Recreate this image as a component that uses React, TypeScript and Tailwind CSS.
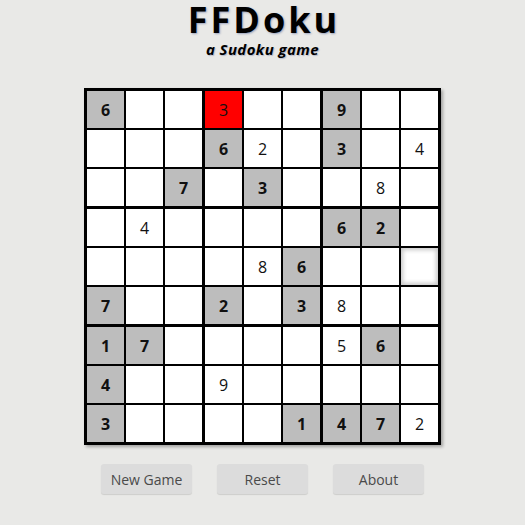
import React from "react";

type Cell = { v: string; given?: boolean; bad?: boolean; sel?: boolean };

const rows = [
  "6g . . 3r . . 9g . .",
  ". . . 6g 2 . 3g . 4",
  ". . 7g . 3g . . 8 .",
  ". 4 . . . . 6g 2g .",
  ". . . . 8 6g . . s",
  "7g . . 2g . 3g 8 . .",
  "1g 7g . . . . 5 6g .",
  "4g . . 9 . . . . .",
  "3g . . . . 1g 4g 7g 2",
];

const board: Cell[][] = rows.map((r) =>
  r.split(" ").map((t) => {
    if (t === ".") return { v: "" };
    if (t === "s") return { v: "", sel: true };
    return { v: t[0], given: t[1] === "g", bad: t[1] === "r" };
  })
);

function SudokuCell({ cell }: { cell: Cell }) {
  let cls = "bg-white";
  if (cell.given) cls = "bg-[#bdbdbd] font-bold";
  if (cell.bad) cls = "bg-[#ff0000]";
  if (cell.sel) cls = "bg-white shadow-[inset_0_0_4px_2px_rgba(0,0,0,0.22)]";
  return (
    <div
      className={`w-[37px] h-[37px] flex items-center justify-center text-[16px] text-[#111] ${cls}`}
    >
      {cell.v}
    </div>
  );
}

export default function App() {
  const boxes = [0, 1, 2].flatMap((br) => [0, 1, 2].map((bc) => ({ br, bc })));

  return (
    <div
      className="w-[525px] h-[525px] bg-[#e9e9e7] flex flex-col items-center"
      style={{ fontFamily: '"Open Sans", "DejaVu Sans", sans-serif' }}
    >
      <h1 className="pl-[3px] text-[36px] leading-[40px] font-bold text-black tracking-[3px] [text-shadow:1px_1px_2px_rgba(60,80,140,0.45)]">
        FFDoku
      </h1>
      <p className="text-[15px] leading-[18px] font-bold italic text-black tracking-[0.4px] [text-shadow:1px_1px_1px_rgba(60,80,140,0.3)]">
        a Sudoku game
      </p>

      <div className="mt-[30px] bg-black p-[3px] grid grid-cols-3 gap-[3px] shadow-[2px_2px_3px_rgba(0,0,0,0.3)]">
        {boxes.map(({ br, bc }) => (
          <div key={`${br}-${bc}`} className="grid grid-cols-3 gap-[2px]">
            {[0, 1, 2].flatMap((r) =>
              [0, 1, 2].map((c) => (
                <SudokuCell key={`${r}-${c}`} cell={board[br * 3 + r][bc * 3 + c]} />
              ))
            )}
          </div>
        ))}
      </div>

      <div className="mt-[19px] flex gap-[25px]">
        {["New Game", "Reset", "About"].map((label) => (
          <button
            key={label}
            className="w-[91px] h-[30px] rounded-[3px] bg-[#dcdcdc] text-[#4a4a4a] text-[14px] shadow-[0_1px_1px_rgba(0,0,0,0.12)]"
          >
            {label}
          </button>
        ))}
      </div>
    </div>
  );
}
